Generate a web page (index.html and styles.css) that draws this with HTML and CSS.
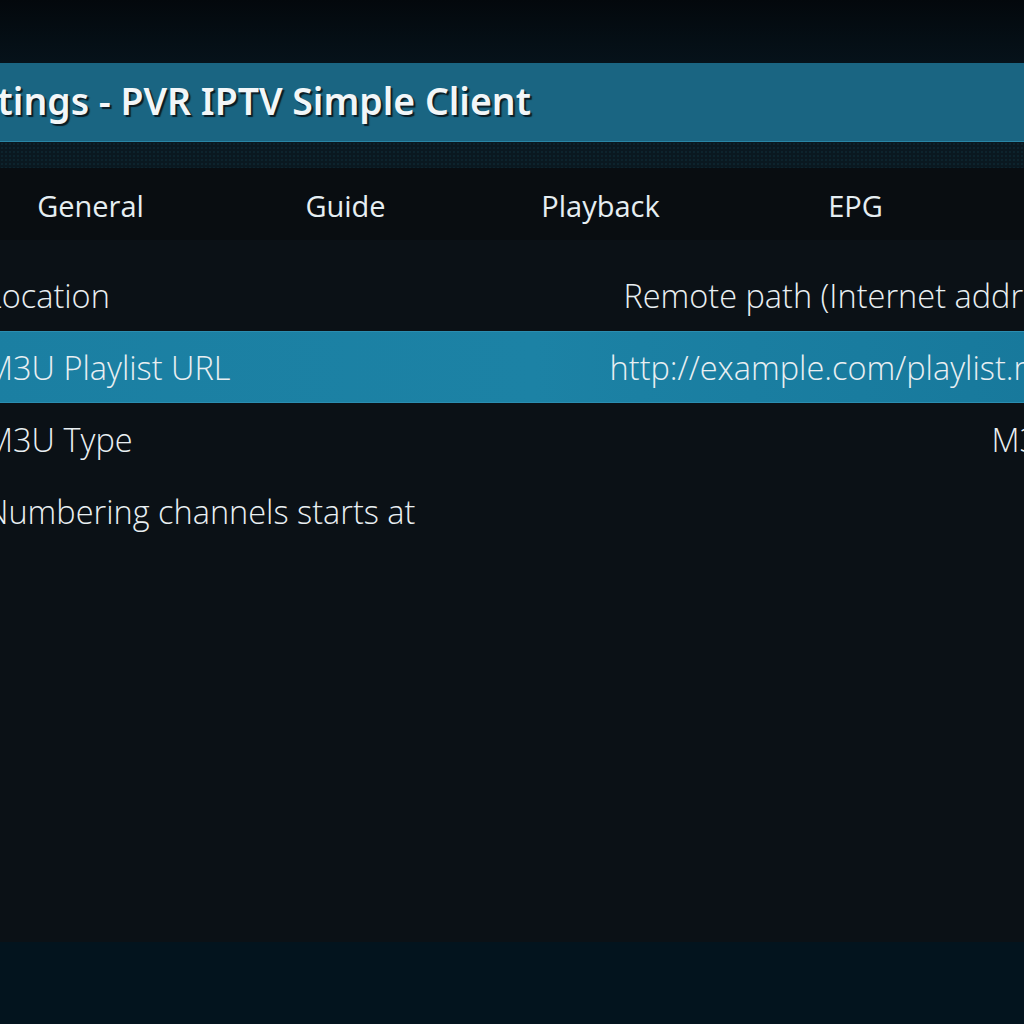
FILE: index.html
```html
<!DOCTYPE html>
<html>
<head>
<meta charset="utf-8">
<link rel="stylesheet" href="styles.css">
</head>
<body>
<div class="screen">
  <div class="top"></div>
  <div class="header"><h1 class="title">Settings - PVR IPTV Simple Client</h1></div>
  <div class="strip"></div>
  <nav class="tabs">
    <div class="tab">General</div>
    <div class="tab">Guide</div>
    <div class="tab">Playback</div>
    <div class="tab">EPG</div>
    <div class="tab">Advanced</div>
  </nav>
  <div class="list">
    <div class="row"><span class="label">Location</span><span class="value">Remote path (Internet address)</span></div>
    <div class="row active"><span class="label">M3U Playlist URL</span><span class="value">http://example.com/playlist.m3u</span></div>
    <div class="row"><span class="label">M3U Type</span><span class="value">M3U8</span></div>
    <div class="row"><span class="label">Numbering channels starts at</span><span class="value"></span></div>
  </div>
  <div class="bottom"></div>
</div>
</body>
</html>
```
FILE: styles.css
```css
html, body {
  margin: 0;
  padding: 0;
  background: #0b1116;
}
.screen {
  width: 1024px;
  height: 1024px;
  overflow: hidden;
  display: flex;
  flex-direction: column;
  font-family: "Open Sans", "Noto Sans", sans-serif;
  color: #eef3f5;
  background: #0b1116;
}
.top {
  height: 63px;
  flex: none;
  background: linear-gradient(180deg, #03080c 0%, #06121a 100%);
}
.header {
  height: 78px;
  flex: none;
  background: #1a6582;
  border-bottom: 1px solid #2a86a5;
  display: flex;
  align-items: center;
  overflow: hidden;
}
.title {
  margin: -4px 0 0 -60px;
  font-family: "Noto Sans", "Open Sans", sans-serif;
  font-size: 37.4px;
  font-weight: 600;
  white-space: nowrap;
  color: #f2f6f8;
  text-shadow: 2px 2px 1px #0a1c24;
}
.strip {
  height: 26px;
  flex: none;
  background: #0a1820;
  background-image: radial-gradient(#11303c 0.6px, transparent 0.8px);
  background-size: 4px 4px;
}
.tabs {
  height: 72px;
  flex: none;
  background: #090d11;
  display: flex;
  margin-left: -37px;
}
.tab {
  width: 255px;
  flex: none;
  display: flex;
  align-items: center;
  justify-content: center;
  font-size: 29px;
  font-weight: 500;
  color: #e6eef2;
  padding-top: 2px;
}
.list {
  flex: 1;
  padding-top: 19px;
}
.row {
  height: 72px;
  display: flex;
  align-items: center;
  justify-content: space-between;
  font-size: 32.5px;
  font-weight: 300;
  margin-left: -15px;
  margin-right: -56px;
  white-space: nowrap;
  color: #e9eff2;
}
.row.active {
  background: linear-gradient(90deg, #1b7fa2 0%, #1c82a5 50%, #17789b 100%);
  border-top: 1px solid #2b8db0;
  border-bottom: 1px solid #2b8db0;
  height: 70px;
}
.bottom {
  height: 82px;
  flex: none;
  background: #03141e;
}
```
